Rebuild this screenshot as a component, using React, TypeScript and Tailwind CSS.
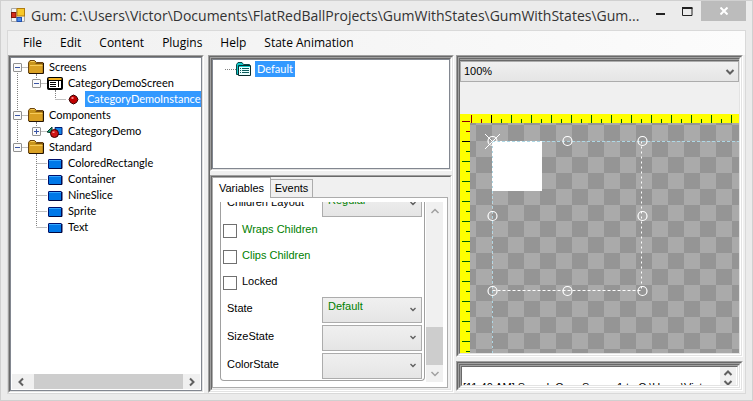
import React, { useState } from "react";

type Icon = "folder" | "screen" | "instance" | "component" | "standard";
type Cell = "none" | "line" | "tee" | "elbow" | "first" | "minus" | "plus";

type Node = { label: string; icon: Icon; cells: Cell[]; selected?: boolean; stem?: boolean };

const NODES: Node[] = [
  { label: "Screens", icon: "folder", cells: ["first"], stem: true },
  { label: "CategoryDemoScreen", icon: "screen", cells: ["line", "minus"], stem: true },
  { label: "CategoryDemoInstance", icon: "instance", cells: ["line", "none", "elbow"], selected: true },
  { label: "Components", icon: "folder", cells: ["tee"], stem: true },
  { label: "CategoryDemo", icon: "component", cells: ["line", "plus"] },
  { label: "Standard", icon: "folder", cells: ["minus"], stem: true },
  { label: "ColoredRectangle", icon: "standard", cells: ["none", "tee"] },
  { label: "Container", icon: "standard", cells: ["none", "tee"] },
  { label: "NineSlice", icon: "standard", cells: ["none", "tee"] },
  { label: "Sprite", icon: "standard", cells: ["none", "tee"] },
  { label: "Text", icon: "standard", cells: ["none", "elbow"] },
];

/* Sunken edge made of a grey pair and a light pair, repeated for each nested panel. */
function Bevel({ depth, className = "", children }: { depth: number; className?: string; children: React.ReactNode }) {
  const inner =
    depth > 1 ? <Bevel depth={depth - 1} className="min-h-0 min-w-0 flex-1">{children}</Bevel> : children;
  return (
    <div className={`flex flex-col border border-t-[#a0a0a0] border-r-white border-b-white border-l-[#a0a0a0] ${className}`}>
      <div className="flex min-h-0 min-w-0 flex-1 flex-col border border-t-[#696969] border-r-[#e3e3e3] border-b-[#e3e3e3] border-l-[#696969]">
        {inner}
      </div>
    </div>
  );
}

function Chevron({ dir, className = "" }: { dir: "up" | "down" | "left" | "right"; className?: string }) {
  const d = {
    up: "M1.5 7 5 3.5 8.5 7",
    down: "M1.5 3 5 6.5 8.5 3",
    left: "M7 1.5 3.5 5 7 8.5",
    right: "M3 1.5 6.5 5 3 8.5",
  }[dir];
  return (
    <svg viewBox="0 0 10 10" className={`h-2.5 w-2.5 ${className}`} fill="none" stroke="currentColor" aria-hidden="true">
      <path d={d} />
    </svg>
  );
}

function Gutter({ cells, stem }: { cells: Cell[]; stem?: boolean }) {
  const width = cells.length * 19 - 2;
  const dots = { stroke: "#808080", strokeDasharray: "1 1" };
  const root = cells[0] === "first" || cells[0] === "tee" || (cells.length === 1 && cells[0] === "minus");
  return (
    <svg width={width} height="16" className="shrink-0 overflow-visible" aria-hidden="true">
      {cells.map((cell, i) => {
        const x = 6.5 + i * 19;
        const last = i === cells.length - 1;
        const box = cell === "minus" || cell === "plus" || (root && i === 0);
        const up = cell === "line" || cell === "tee" || cell === "elbow" || cell === "minus" || cell === "plus";
        const down = cell === "line" || cell === "tee" || cell === "first";
        return (
          <g key={i}>
            {up && <line x1={x} x2={x} y1="0" y2="8" {...dots} />}
            {down && <line x1={x} x2={x} y1="8" y2="16" {...dots} />}
            {last && <line x1={x} x2={width} y1="8.5" y2="8.5" {...dots} />}
            {box && (
              <>
                <rect x={x - 4} y="4.5" width="8" height="8" rx="0.5" fill="#fafafa" stroke="#919191" />
                <path d={`M${x - 2.5} 8.5h5`} stroke="#3a55a5" />
                {cell === "plus" && <path d={`M${x} 6v5`} stroke="#3a55a5" />}
              </>
            )}
          </g>
        );
      })}
      {stem && <line x1={width + 8.5} x2={width + 8.5} y1="15" y2="16" {...dots} />}
    </svg>
  );
}

function NodeIcon({ icon }: { icon: Icon }) {
  return (
    <svg viewBox="0 0 16 16" className="h-4 w-4 shrink-0" aria-hidden="true">
      {icon === "folder" && (
        <>
          <path d="M.5 14V3.500L2 1.500h4.500l2 2h6.500V14z" fill="#c8951c" stroke="#6b4410" />
          <path d="M1.500 6.500h13V14h-13z" fill="#d9a023" />
          <path d="M2 6.500h12.500M2.500 2.500h4" stroke="#f8cc5a" />
          <path d="M1 14.500h14.500V4" fill="none" stroke="#241404" />
          <path d="M7.500 4.500h7" stroke="#7a5010" />
        </>
      )}
      {icon === "screen" && (
        <>
          <rect x="0.5" y="2.5" width="15" height="12" rx="1" fill="#000" stroke="#000" />
          <path d="M1.500 4h13" stroke="#f0b020" strokeWidth="2" />
          <path d="M2 6h12v7H2z" fill="#fff" />
          <path d="M3 7.500h6M3 9.500h6M3 11.500h6M11.500 6v6" stroke="#000" />
        </>
      )}
      {icon === "instance" && (
        <>
          <path d="m7.500 4 3 1.500 1.500 3-1.500 3-3 1.500-3-1.500-1.500-3 1.500-3z" fill="#c00000" stroke="#3a0000" />
          <path d="M5.500 6h2v2h-2z" fill="#ff8a8a" />
        </>
      )}
      {icon === "component" && (
        <>
          <path d="M0 9 5 4v6z" fill="#1fa07a" stroke="#05382a" />
          <path d="M8 4.500h7v7H9z" fill="#1484e8" stroke="#001a70" />
          <circle cx="7.500" cy="10.500" r="4" fill="#d01414" stroke="#3a0000" />
          <path d="M5.500 8.500h2V10h-2z" fill="#ff9a9a" />
        </>
      )}
      {icon === "standard" && (
        <>
          <rect x="1.500" y="4.500" width="13" height="9" rx="0.500" fill="#0078e8" stroke="#00106c" />
          <path d="M2 5.500h12" stroke="#38a8ff" />
          <path d="M2 13.500h13V5" fill="none" stroke="#000840" />
        </>
      )}
    </svg>
  );
}

function Tree() {
  return (
    <ul className="flex-1 overflow-hidden pt-px font-[Lato,sans-serif]" aria-label="Project elements">
      {NODES.map((n) => (
        <li key={n.label} className="flex h-4 items-center">
          <Gutter cells={n.cells} stem={n.stem} />
          <NodeIcon icon={n.icon} />
          <span
            className={`ml-[3px] h-4 px-[2px] leading-4 whitespace-nowrap ${n.selected ? "bg-[#3399ff] text-white" : ""}`}
          >
            {n.label}
          </span>
        </li>
      ))}
    </ul>
  );
}

function CheckRow({ label, green }: { label: string; green?: boolean }) {
  return (
    <label className={`flex h-[26px] shrink-0 items-center pl-[2px] ${green ? "text-[#008000]" : ""}`}>
      <input
        type="checkbox"
        className="mr-[5px] h-3.5 w-3.5 appearance-none border border-[#707070] bg-white checked:bg-[#707070]"
      />
      <span className="pb-1 leading-4">{label}</span>
    </label>
  );
}

function SelectRow({ label, value }: { label: string; value: string }) {
  return (
    <label className="flex h-7 shrink-0 items-center pr-[2px] pl-[6px]">
      <span className="flex-1 pb-1 leading-4">{label}</span>
      <span className="relative">
        <select
          defaultValue={value}
          className="block h-[26px] w-[100px] appearance-none border border-[#acacac] bg-linear-to-b from-[#f0f0f0] to-[#e5e5e5] pb-2 pl-[5px] leading-4 text-[#008000]"
        >
          <option>{value}</option>
        </select>
        <svg
          viewBox="0 0 6 5"
          className="pointer-events-none absolute top-[10px] right-[6px] h-[5px] w-[6px]"
          fill="none"
          stroke="#606060"
          aria-hidden="true"
        >
          <path d="M.5 1 3 3.500 5.500 1" strokeWidth="1.400" />
        </svg>
      </span>
    </label>
  );
}

function Variables() {
  return (
    <div className="flex min-h-0 flex-1 border border-[#acacac] bg-white pt-1 pr-1 pb-[5px] pl-[7px]">
      <div className="flex min-w-0 flex-1 flex-col justify-end overflow-hidden pb-px">
        <div className="flex flex-col rounded-b border border-t-0 border-[#a0a0a0]">
          <SelectRow label="Children Layout" value="Regular" />
          <CheckRow label="Wraps Children" green />
          <CheckRow label="Clips Children" green />
          <CheckRow label="Locked" />
          <SelectRow label="State" value="Default" />
          <SelectRow label="SizeState" value="" />
          <SelectRow label="ColorState" value="" />
        </div>
      </div>
      <div className="ml-px flex w-[17px] flex-col items-center bg-[#f0f0f0] text-[#a0a0a0]">
        <button aria-label="Scroll up" className="grid h-[17px] w-full place-items-center">
          <Chevron dir="up" className="stroke-[1.5]" />
        </button>
        <div className="flex w-full flex-1 flex-col justify-end">
          <div className="h-[38px] bg-[#cdcdcd]" />
        </div>
        <button aria-label="Scroll down" className="grid h-[17px] w-full place-items-center">
          <Chevron dir="down" className="stroke-[1.5]" />
        </button>
      </div>
    </div>
  );
}

/* Editing surface: rulers, checkered backdrop, the demo rectangle and its resize handles. */
function Canvas() {
  const handles = [
    [32.5, 27], [107.5, 27], [182.5, 27],
    [32.5, 102], [182.5, 102],
    [32.5, 177], [107.5, 177], [182.5, 177],
  ];
  return (
    <svg className="block min-h-0 w-full flex-1" role="img" aria-label="Screen preview">
      <defs>
        <pattern id="checks" x="16" y="11" width="32" height="32" patternUnits="userSpaceOnUse">
          <rect width="32" height="32" fill="#aaaaaa" />
          <path d="M0 0h16v16H0zM16 16h16v16H16z" fill="#959595" />
        </pattern>
        <pattern id="ticksX" x="31" y="0" width="20" height="10" patternUnits="userSpaceOnUse">
          <path d="M.5 1v8M10.500 5v4" stroke="#006400" />
        </pattern>
        <pattern id="ticksY" x="0" y="27" width="10" height="20" patternUnits="userSpaceOnUse">
          <path d="M2 .5h8M6 10.500h4" stroke="#006400" />
        </pattern>
      </defs>
      <rect width="100%" height="100%" fill="#ffff00" />
      <rect x="32" width="100%" height="9" fill="url(#ticksX)" />
      <rect y="28" width="10" height="100%" fill="url(#ticksY)" />
      <rect x="10" y="9" width="100%" height="100%" fill="url(#checks)" />
      <path d="M11.500 1v8M21.500 5v4M2 7.500h8M6 17.500h4" stroke="#8b0000" />
      <path d="M31.500 1v8M2 27.500h8" stroke="#000" />
      <rect x="32" y="27" width="50" height="50" fill="#fff" />
      <path d="M32.500 27.500v150" stroke="#fff" strokeDasharray="2 3" />
      <path d="M32.500 176.500h150" stroke="#fff" strokeDasharray="3 2" />
      <path d="M181.500 27.500v150" stroke="#fff" strokeDasharray="2 3" />
      <line x1="32" y1="27.500" x2="100%" y2="27.500" stroke="#add8e6" strokeDasharray="3 2" />
      <line x1="32.500" y1="27" x2="32.500" y2="100%" stroke="#add8e6" strokeDasharray="2 3" />
      <path d="m25 20 15 15M40 20 25 35" stroke="#fff" />
      {handles.map(([x, y]) => (
        <circle key={`${x},${y}`} cx={x} cy={y} r="4.500" fill="none" stroke="#fff" strokeWidth="1.200" />
      ))}
    </svg>
  );
}

function TitleBar() {
  return (
    <header className="flex h-[29px] shrink-0 items-start pl-[10px]">
      <svg viewBox="0 0 15 15" className="mt-[7px] h-[15px] w-[15px] shrink-0" aria-hidden="true">
        <path d="M.5.5h13v13H.5z" fill="#f4f4f4" stroke="#a8a8a8" />
        <path d="M.5 9.500h5v4M5.500.5v4h-5M10.500 9.500v4" fill="none" stroke="#b8b8b8" />
        <rect x="0.500" y="4.500" width="4.500" height="5" fill="#d42c1c" stroke="#801808" />
        <rect x="6" y="0.500" width="7.500" height="7.500" fill="#f8c828" stroke="#b07c10" />
        <rect x="6" y="9.500" width="4.500" height="4" fill="#4a8ae8" stroke="#2050b0" />
      </svg>
      <h1 className="ml-[5px] min-w-0 flex-1 font-['Open_Sans','Noto_Sans',sans-serif] text-[14px] leading-[30px] whitespace-nowrap text-[#333]">
        Gum: C:\Users\Victor\Documents\FlatRedBallProjects\GumWithStates\GumWithStates\Gum...
      </h1>
      <div className="flex shrink-0">
        <button aria-label="Minimize" className="grid h-5 w-[27px] place-items-center">
          <svg width="9" height="10" aria-hidden="true"><path d="M0 8h9" stroke="#222" strokeWidth="2" /></svg>
        </button>
        <button aria-label="Maximize" className="grid h-5 w-[27px] place-items-center">
          <svg width="11" height="9" aria-hidden="true">
            <path d="M.5 1v7.500h9.500V1" fill="none" stroke="#222" />
            <path d="M0 1h10.500" stroke="#222" strokeWidth="2" />
          </svg>
        </button>
        <button aria-label="Close" className="mr-[6px] grid h-5 w-[45px] place-items-center bg-[#bcbcbc]">
          <svg width="8" height="8" aria-hidden="true"><path d="m.5.5 7 7m0-7-7 7" stroke="#fff" strokeWidth="2" /></svg>
        </button>
      </div>
    </header>
  );
}

export default function App() {
  const [tab, setTab] = useState("Variables");
  return (
    <div className="flex h-screen flex-col border border-[#d0d0d0] bg-[#ebebeb] font-['Liberation_Sans',Arial,sans-serif] text-[11px] text-black">
      <TitleBar />
      <main className="mx-[6px] mb-[6px] flex min-h-0 flex-1 flex-col border border-[#d9d9d9] bg-[#f0f0f0]">
        <nav
          aria-label="Main menu"
          className="flex h-6 shrink-0 items-center gap-[18px] bg-linear-to-r from-[#f0f0f0] to-[#fcfcfc] pl-[15px] font-['Open_Sans','Noto_Sans',sans-serif] text-[12px]"
        >
          {["File", "Edit", "Content", "Plugins", "Help", "State Animation"].map((m) => (
            <button key={m} className="whitespace-nowrap">{m}</button>
          ))}
        </nav>

        <div className="flex min-h-0 flex-1">
          <Bevel depth={1} className="w-[196px] shrink-0">
            <div className="flex min-h-0 flex-1 flex-col border border-[#828790] bg-white">
              <Tree />
              <div className="mx-px mb-px flex h-[15px] shrink-0 bg-[#f0f0f0] text-[#606060]">
                <button aria-label="Scroll left" className="grid w-[17px] place-items-center">
                  <Chevron dir="left" className="stroke-2" />
                </button>
                <div className="flex flex-1 pl-[5px]">
                  <div className="flex-1 bg-[#cdcdcd]" />
                </div>
                <button aria-label="Scroll right" className="grid w-[17px] place-items-center">
                  <Chevron dir="right" className="stroke-2" />
                </button>
              </div>
            </div>
          </Bevel>

          <Bevel depth={1} className="ml-1 w-[246px] shrink-0">
            <div className="flex min-h-0 flex-1 flex-col gap-1">
              <Bevel depth={1} className="h-[114px] shrink-0">
                <div className="flex-1 border border-[#828790] bg-white pt-px">
                  <div className="flex h-4 items-center pl-[12px] font-[Lato,sans-serif]">
                    <svg width="11" height="16" aria-hidden="true">
                      <path d="M0 8.500h11" stroke="#808080" strokeDasharray="1 1" />
                    </svg>
                    <svg viewBox="0 0 16 16" className="h-4 w-4" aria-hidden="true">
                      <path d="M.5 3.500 2 1.500h4l1.500 2h6v10H.5z" fill="#10c8c8" stroke="#084848" />
                      <path d="M2.500 4.500h12v10h-12z" fill="#e8ffff" stroke="#062c2c" />
                      <path d="M3 5.500h11" stroke="#10c8c8" />
                      <path d="M4 7.500h1m1 0h7M4 9.500h1m1 0h7M4 11.500h1m1 0h7" stroke="#0c5c5c" />
                    </svg>
                    <span className="ml-[3px] h-4 bg-[#3399ff] px-[2px] leading-4 text-white">Default</span>
                  </div>
                </div>
              </Bevel>
              <Bevel depth={1} className="min-h-0 flex-1">
                <div className="flex min-h-0 flex-1 flex-col pr-[2px] pb-px">
                  <div role="tablist" className="flex items-end">
                    {["Variables", "Events"].map((t) => (
                      <button
                        key={t}
                        role="tab"
                        aria-selected={tab === t}
                        onClick={() => setTab(t)}
                        className={
                          tab === t
                            ? "z-10 -mb-px h-[21px] w-[59px] border border-b-0 border-[#acacac] bg-white"
                            : "h-[18px] w-[42px] border border-b-0 border-l-0 border-[#acacac] bg-[#f0f0f0]"
                        }
                      >
                        {t}
                      </button>
                    ))}
                  </div>
                  <Variables />
                </div>
              </Bevel>
            </div>
          </Bevel>

          <div className="ml-[2px] flex min-w-0 flex-1 flex-col gap-1 pr-[2px] pb-[2px]">
            <Bevel depth={2} className="min-h-0 flex-1">
              <div className="border-t border-[#a0a0a0]">
                <div className="relative border-t border-[#696969]">
                  <select
                    aria-label="Zoom"
                    defaultValue="100%"
                    className="block h-[21px] w-full appearance-none border border-[#acacac] bg-linear-to-b from-[#f0f0f0] to-[#e5e5e5] pl-[3px]"
                  >
                    <option>50%</option>
                    <option>100%</option>
                    <option>200%</option>
                  </select>
                  <Chevron dir="down" className="pointer-events-none absolute top-[6px] right-1 stroke-2 text-[#606060]" />
                </div>
              </div>
              <div className="h-8 shrink-0" />
              <Canvas />
            </Bevel>
            <Bevel depth={3} className="h-[30px] shrink-0">
              <div className="flex min-h-0 flex-1 overflow-hidden bg-white">
                <p className="min-w-0 flex-1 overflow-hidden pt-3 pl-px leading-4 whitespace-nowrap">
                  [11:40 AM] Saved: Gum Screen1 to C:\Users\Victor
                </p>
                <div className="flex w-4 flex-col items-center bg-[#f0f0f0] pt-px text-[#606060]">
                  <Chevron dir="up" className="shrink-0 stroke-2" />
                  <Chevron dir="down" className="shrink-0 stroke-2" />
                </div>
                <div className="w-px bg-white" />
              </div>
            </Bevel>
          </div>
        </div>
      </main>
    </div>
  );
}
